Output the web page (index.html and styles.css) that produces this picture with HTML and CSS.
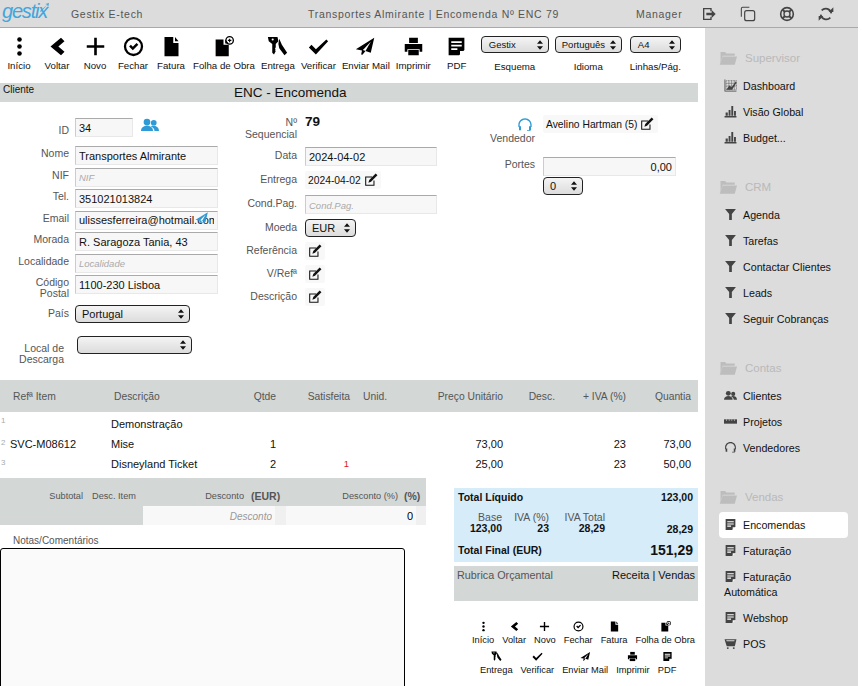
FILE: index.html
```html
<!DOCTYPE html>
<html lang="pt">
<head>
    <meta charset="UTF-8">
    <title>ENC - Encomenda</title>
    <link rel="stylesheet" href="styles.css">
</head>
<body>
    <svg class="icon-defs" aria-hidden="true">
        <symbol id="i-dots" viewBox="0 0 24 24"><circle cx="12" cy="4" r="2.6"/><circle cx="12" cy="12" r="2.6"/><circle cx="12" cy="20" r="2.6"/></symbol>
        <symbol id="i-back" viewBox="0 0 24 24"><path d="M16 2l4 4-7 6 7 6-4 4L4 12z"/></symbol>
        <symbol id="i-plus" viewBox="0 0 24 24"><path d="M10.500 2h3v8.500h8.500v3h-8.500V22h-3v-8.500H2v-3h8.500z"/></symbol>
        <symbol id="i-fechar" viewBox="0 0 24 24"><path d="M12 1a11 11 0 1 0 0 22 11 11 0 0 0 0-22zm0 2.600a8.400 8.400 0 1 1 0 16.800 8.400 8.400 0 0 1 0-16.800z"/><path d="M7 12l2-2 2.200 2.200L15.500 8l2 2-6.300 6.200z"/></symbol>
        <symbol id="i-file" viewBox="0 0 24 24"><path d="M4 1h10v7h6v15H4z"/><path d="M16 1l4 5h-4z"/></symbol>
        <symbol id="i-fileplus" viewBox="0 0 24 24"><path d="M3 4h9v6h6v13H3z"/><path d="M14 4l4 4.500h-4z"/><path d="M19 0a5 5 0 1 0 0 10 5 5 0 0 0 0-10zm0 1.500a3.500 3.500 0 1 1 0 7 3.500 3.500 0 0 1 0-7z"/><path d="M18.400 3h1.200v1.400H21v1.200h-1.400V7h-1.200V5.600H17V4.400h1.400z"/></symbol>
        <symbol id="i-keys" viewBox="0 0 24 24"><path d="M1 1h11l1 5-3 3v4l-1 1 1 1-1 1 1 1-2 4-2-2V9L2 6z"/><circle cx="6.500" cy="4" r="1.200" fill="#fff"/><path d="M14 3l3 7 6 9-3 3-6-8-1-5z"/></symbol>
        <symbol id="i-check" viewBox="0 0 24 24"><path d="M1 13l3-3 5 5L21 4l2 2-14 15z"/></symbol>
        <symbol id="i-plane" viewBox="0 0 24 24"><path d="M22 2L1 15l7 1.500L7 21l1.500.5 3.500-4.500 6 2z"/><path d="M18 6.500l-9 9.500 3 1z" fill="#fff"/></symbol>
        <symbol id="i-print" viewBox="0 0 24 24"><path d="M7 2h10v6H7z"/><path d="M2 9h20v9h-3v-3H5v3H2z"/><path d="M6 16h12v6H6z"/></symbol>
        <symbol id="i-note" viewBox="0 0 24 24"><path d="M3 2h18v14l-6 6H3z"/><path d="M6 6h12v2H6zM6 10h12v2H6zM6 14h7v2H6z" fill="#fff"/><path d="M16 17h5l-5 5z" fill="#fff"/></symbol>
        <symbol id="i-edit" viewBox="0 0 24 24"><path d="M2 6h12v1.800H3.800v12.400h12.400V13H18v9H2z"/><path d="M20 1l3 3-11 11-4.500 1.500L9 12z"/></symbol>
        <symbol id="i-users" viewBox="0 0 24 24"><circle cx="8" cy="8" r="4.500"/><path d="M0 20c0-5 4-7 8-7s8 2 8 7z"/><circle cx="17" cy="9" r="3.800"/><path d="M13 13.500c4-1.500 11-.5 11 6.500h-6c0-3-2-5-5-6.500z"/></symbol>
        <symbol id="i-headset" viewBox="0 0 24 24"><path d="M12 2C6 2 2 6.500 2 12v3h2v-3c0-4.500 3.500-8 8-8s8 3.500 8 8v3h2v-3c0-5.500-4-10-10-10z"/><path d="M3 14h3v6H3zM18 14h3v6h-3z"/><path d="M20 19v2h-5v-1h4z"/></symbol>
        <symbol id="i-folder" viewBox="0 0 24 24"><path d="M2 4h6l2 2h11v3H5L2 19z"/><path d="M5 10h19l-3 11H1z"/></symbol>
        <symbol id="i-dash" viewBox="0 0 24 24"><path d="M1 1h1.500v20.500H23V23H1z"/><path d="M4 3h19v17H4z" fill="none" stroke="currentColor" stroke-width="1" stroke-dasharray="2 1"/><path d="M4 8h19M4 13h19M9 3v17M14 3v17M19 3v17" fill="none" stroke="currentColor" stroke-width=".8"/><path d="M4 20l6-8 4 3 8-11 1 3-8 13H4z"/></symbol>
        <symbol id="i-bars" viewBox="0 0 24 24"><path d="M1 20.500h22V23H1zM3 14h4v6H3zM8.500 9h3.500v11H8.500zM13.500 2h3.500v18h-3.500zM18.500 11H22v9h-3.500z"/></symbol>
        <symbol id="i-funnel" viewBox="0 0 24 24"><path d="M2 2h20l-7.500 9v11h-5V11z"/></symbol>
        <symbol id="i-ruler" viewBox="0 0 24 24"><path d="M0 8h24v8H0z"/><path d="M4 8h1v3H4zM9 8h1v3H9zM14 8h1v3h-1zM19 8h1v3h-1z" fill="#dcdcdc"/></symbol>
        <symbol id="i-cart" viewBox="0 0 24 24"><path d="M1 4h22l-3 13H5z"/><path d="M4 6l1 2h14l.5-2z" fill="#dcdcdc"/><circle cx="7" cy="20.500" r="1.800"/><circle cx="18" cy="20.500" r="1.800"/></symbol>
        <symbol id="i-logout" viewBox="0 0 24 24"><path d="M3 3h13v5h-2V5H5v14h9v-3h2v5H3z"/><path d="M8 10h8V6l6 6-6 6v-4H8z"/></symbol>
        <symbol id="i-copy" viewBox="0 0 24 24"><path d="M2 16V4a2 2 0 0 1 2-2h10" fill="none" stroke="currentColor" stroke-width="1.600"/><rect x="7" y="7" width="15" height="15" rx="3" fill="none" stroke="currentColor" stroke-width="1.800"/></symbol>
        <symbol id="i-help" viewBox="0 0 24 24"><circle cx="12" cy="12" r="9.500" fill="none" stroke="currentColor" stroke-width="2.400"/><circle cx="12" cy="12" r="4.500" fill="none" stroke="currentColor" stroke-width="2"/><path d="M5 5l4 4M19 5l-4 4M5 19l4-4M19 19l-4-4" stroke="currentColor" stroke-width="3"/></symbol>
        <symbol id="i-sync" viewBox="0 0 24 24"><path d="M20 11A8.500 8.500 0 0 0 5.500 6.500M4 13a8.500 8.500 0 0 0 14.500 4.500" fill="none" stroke="currentColor" stroke-width="2.600"/><path d="M16 9h7V2zM8 15H1v7z"/></symbol>
        <symbol id="arrows" viewBox="0 0 7 11"><path d="M3.500 0L7 4H0zM3.500 11L0 7h7z"/></symbol>
    </svg>

    <header class="topbar">
        <div class="logo">gestix<svg class="logo-tick" viewBox="0 0 10 10"><path d="M0 9l8-7-2-1 4-1-1 5-1-3-7 8z"/></svg></div>
        <div class="company">Gestix E-tech</div>
        <div class="doc-title">Transportes Almirante | Encomenda Nº ENC 79</div>
        <div class="user">Manager</div>
        <div class="top-icons">
            <svg class="top-icon"><use href="#i-logout"/></svg>
            <svg class="top-icon"><use href="#i-copy"/></svg>
            <svg class="top-icon"><use href="#i-help"/></svg>
            <svg class="top-icon"><use href="#i-sync"/></svg>
        </div>
    </header>

    <div class="layout">
        <main class="content">
            <div class="toolbar">
                <a class="tool"><svg><use href="#i-dots"/></svg>Início</a>
                <a class="tool"><svg><use href="#i-back"/></svg>Voltar</a>
                <a class="tool"><svg><use href="#i-plus"/></svg>Novo</a>
                <a class="tool"><svg><use href="#i-fechar"/></svg>Fechar</a>
                <a class="tool"><svg><use href="#i-file"/></svg>Fatura</a>
                <a class="tool"><svg><use href="#i-fileplus"/></svg>Folha de Obra</a>
                <a class="tool"><svg><use href="#i-keys"/></svg>Entrega</a>
                <a class="tool"><svg><use href="#i-check"/></svg>Verificar</a>
                <a class="tool"><svg><use href="#i-plane"/></svg>Enviar Mail</a>
                <a class="tool"><svg><use href="#i-print"/></svg>Imprimir</a>
                <a class="tool tool-pdf"><svg><use href="#i-note"/></svg>PDF</a>
                <div class="tool-select sel-schema">
                    <div class="select select-small">Gestix<svg class="arrows"><use href="#arrows"/></svg></div>
                    <span>Esquema</span>
                </div>
                <div class="tool-select sel-lang">
                    <div class="select select-small">Português<svg class="arrows"><use href="#arrows"/></svg></div>
                    <span>Idioma</span>
                </div>
                <div class="tool-select sel-lines">
                    <div class="select select-small">A4<svg class="arrows"><use href="#arrows"/></svg></div>
                    <span>Linhas/Pág.</span>
                </div>
            </div>

            <div class="section-bar">
                <span class="section-name">Cliente</span>
                <span class="section-title">ENC - Encomenda</span>
            </div>

            <div class="form">
                <div class="col col-client">
                    <div class="row row-id">
                        <label>ID</label>
                        <input class="field field-id" value="34">
                        <svg class="client-link"><use href="#i-users"/></svg>
                    </div>
                    <div class="row"><label>Nome</label><input class="field" value="Transportes Almirante"></div>
                    <div class="row"><label>NIF</label><input class="field" placeholder="NIF"></div>
                    <div class="row"><label>Tel.</label><input class="field" value="351021013824"></div>
                    <div class="row email-row">
                        <label>Email</label><input class="field" value="ulissesferreira@hotmail.com">
                        <svg class="mail-link"><use href="#i-plane"/></svg>
                    </div>
                    <div class="row"><label>Morada</label><input class="field" value="R. Saragoza Tania, 43"></div>
                    <div class="row"><label>Localidade</label><input class="field" placeholder="Localidade"></div>
                    <div class="row row-postal"><label>Código<br>Postal</label><input class="field" value="1100-230 Lisboa"></div>
                    <div class="row row-pais">
                        <label>País</label>
                        <div class="select select-wide">Portugal<svg class="arrows"><use href="#arrows"/></svg></div>
                    </div>
                    <div class="row row-descarga">
                        <label>Local de<br>Descarga</label>
                        <div class="select select-wide"><svg class="arrows"><use href="#arrows"/></svg></div>
                    </div>
                </div>

                <div class="col col-doc">
                    <div class="row row-seq"><label>Nº<br>Sequencial</label><strong class="seq">79</strong></div>
                    <div class="row row-tall"><label>Data</label><input class="field" value="2024-04-02"></div>
                    <div class="row row-tall"><label>Entrega</label><div class="picker">2024-04-02<svg class="edit"><use href="#i-edit"/></svg></div></div>
                    <div class="row row-tall"><label>Cond.Pag.</label><input class="field" placeholder="Cond.Pag."></div>
                    <div class="row"><label>Moeda</label><div class="select select-coin">EUR<svg class="arrows"><use href="#arrows"/></svg></div></div>
                    <div class="row"><label>Referência</label><div class="picker"><svg class="edit"><use href="#i-edit"/></svg></div></div>
                    <div class="row"><label>V/Refª</label><div class="picker"><svg class="edit"><use href="#i-edit"/></svg></div></div>
                    <div class="row"><label>Descrição</label><div class="picker"><svg class="edit"><use href="#i-edit"/></svg></div></div>
                </div>

                <div class="col col-seller">
                    <div class="row row-seller">
                        <label><svg class="seller-icon"><use href="#i-headset"/></svg>Vendedor</label>
                        <div class="picker">Avelino Hartman (5)<svg class="edit"><use href="#i-edit"/></svg></div>
                    </div>
                    <div class="row row-portes">
                        <label>Portes</label>
                        <div class="portes">
                            <input class="field field-num" value="0,00">
                            <div class="select select-tiny">0<svg class="arrows"><use href="#arrows"/></svg></div>
                        </div>
                    </div>
                </div>
            </div>

            <table class="items">
                <thead>
                    <tr>
                        <th class="c-ref">Refª Item</th>
                        <th class="c-desc">Descrição</th>
                        <th class="c-qty">Qtde</th>
                        <th class="c-sat">Satisfeita</th>
                        <th class="c-unit">Unid.</th>
                        <th class="c-price">Preço Unitário</th>
                        <th class="c-disc">Desc.</th>
                        <th class="c-vat">+ IVA (%)</th>
                        <th class="c-total">Quantia</th>
                    </tr>
                </thead>
                <tbody>
                    <tr>
                        <td class="c-ref"><span class="line-no">1</span></td>
                        <td class="c-desc">Demonstração</td>
                        <td class="c-qty"></td><td class="c-sat"></td><td class="c-unit"></td>
                        <td class="c-price"></td><td class="c-disc"></td><td class="c-vat"></td><td class="c-total"></td>
                    </tr>
                    <tr>
                        <td class="c-ref"><span class="line-no">2</span>SVC-M08612</td>
                        <td class="c-desc">Mise</td>
                        <td class="c-qty">1</td><td class="c-sat"></td><td class="c-unit"></td>
                        <td class="c-price">73,00</td><td class="c-disc"></td><td class="c-vat">23</td><td class="c-total">73,00</td>
                    </tr>
                    <tr>
                        <td class="c-ref"><span class="line-no">3</span></td>
                        <td class="c-desc">Disneyland Ticket</td>
                        <td class="c-qty">2</td><td class="c-sat pending">1</td><td class="c-unit"></td>
                        <td class="c-price">25,00</td><td class="c-disc"></td><td class="c-vat">23</td><td class="c-total">50,00</td>
                    </tr>
                </tbody>
            </table>

            <div class="bottom">
                <div class="bottom-left">
                    <div class="discounts">
                        <div class="disc-head">
                            <span class="dh-sub">Subtotal</span>
                            <span class="dh-item">Desc. Item</span>
                            <span class="dh-val">Desconto</span>
                            <b class="dh-eur">(EUR)</b>
                            <span class="dh-pct">Desconto (%)</span>
                            <b class="dh-sym">(%)</b>
                        </div>
                        <div class="disc-inputs">
                            <div class="disc-fields">
                                <input class="disc-input" placeholder="Desconto">
                                <input class="disc-input disc-pct" value="0">
                            </div>
                        </div>
                    </div>
                    <div class="notes-label">Notas/Comentários</div>
                    <textarea class="notes"></textarea>
                </div>

                <div class="bottom-right">
                    <div class="totals">
                        <div class="total-line"><span>Total Líquido</span><span>123,00</span></div>
                        <div class="vat-line">
                            <div class="vat-cell vat-base"><span>Base</span><b>123,00</b></div>
                            <div class="vat-cell vat-rate"><span>IVA (%)</span><b>23</b></div>
                            <div class="vat-cell vat-sum"><span>IVA Total</span><b>28,29</b></div>
                            <b class="vat-total">28,29</b>
                        </div>
                        <div class="total-line final"><span>Total Final (EUR)</span><span class="grand">151,29</span></div>
                    </div>
                    <div class="budget"><span>Rubrica Orçamental</span><span class="budget-val">Receita | Vendas</span></div>
                    <div class="mini-tools">
                        <div class="mini-row">
                            <a class="tool mini"><svg><use href="#i-dots"/></svg>Início</a>
                            <a class="tool mini"><svg><use href="#i-back"/></svg>Voltar</a>
                            <a class="tool mini"><svg><use href="#i-plus"/></svg>Novo</a>
                            <a class="tool mini"><svg><use href="#i-fechar"/></svg>Fechar</a>
                            <a class="tool mini"><svg><use href="#i-file"/></svg>Fatura</a>
                            <a class="tool mini"><svg><use href="#i-fileplus"/></svg>Folha de Obra</a>
                        </div>
                        <div class="mini-row">
                            <a class="tool mini"><svg><use href="#i-keys"/></svg>Entrega</a>
                            <a class="tool mini"><svg><use href="#i-check"/></svg>Verificar</a>
                            <a class="tool mini"><svg><use href="#i-plane"/></svg>Enviar Mail</a>
                            <a class="tool mini"><svg><use href="#i-print"/></svg>Imprimir</a>
                            <a class="tool mini"><svg><use href="#i-note"/></svg>PDF</a>
                        </div>
                    </div>
                </div>
            </div>
        </main>

        <nav class="sidebar">
            <div class="group">
                <div class="group-head"><svg><use href="#i-folder"/></svg>Supervisor</div>
                <a class="item"><svg><use href="#i-dash"/></svg>Dashboard</a>
                <a class="item"><svg><use href="#i-bars"/></svg>Visão Global</a>
                <a class="item"><svg><use href="#i-bars"/></svg>Budget...</a>
            </div>
            <div class="group">
                <div class="group-head"><svg><use href="#i-folder"/></svg>CRM</div>
                <a class="item"><svg><use href="#i-funnel"/></svg>Agenda</a>
                <a class="item"><svg><use href="#i-funnel"/></svg>Tarefas</a>
                <a class="item"><svg><use href="#i-funnel"/></svg>Contactar Clientes</a>
                <a class="item"><svg><use href="#i-funnel"/></svg>Leads</a>
                <a class="item"><svg><use href="#i-funnel"/></svg>Seguir Cobranças</a>
            </div>
            <div class="group">
                <div class="group-head"><svg><use href="#i-folder"/></svg>Contas</div>
                <a class="item"><svg><use href="#i-users"/></svg>Clientes</a>
                <a class="item"><svg><use href="#i-ruler"/></svg>Projetos</a>
                <a class="item"><svg><use href="#i-headset"/></svg>Vendedores</a>
            </div>
            <div class="group">
                <div class="group-head"><svg><use href="#i-folder"/></svg>Vendas</div>
                <a class="item active"><svg><use href="#i-note"/></svg>Encomendas</a>
                <a class="item"><svg><use href="#i-note"/></svg>Faturação</a>
                <a class="item item-wrap"><svg><use href="#i-note"/></svg>Faturação Automática</a>
                <a class="item"><svg><use href="#i-note"/></svg>Webshop</a>
                <a class="item"><svg><use href="#i-cart"/></svg>POS</a>
            </div>
            <div class="group">
                <div class="group-head"><svg><use href="#i-folder"/></svg></div>
            </div>
        </nav>
    </div>
</body>
</html>
```

FILE: styles.css
```css
html, body {
    margin: 0;
    height: 686px;
    overflow: hidden;
}

body {
    font-family: 'Liberation Sans', Arial, sans-serif;
    font-size: 11px;
    color: #111;
    background: #fff;
}

.icon-defs {
    position: absolute;
    width: 0;
    height: 0;
}

a {
    color: inherit;
    text-decoration: none;
}

/* top bar */
.topbar {
    width: 858px;
    height: 27px;
    display: flex;
    align-items: center;
    background: #dcdcdc;
    border-bottom: 1px solid #a9a9a9;
    color: #555;
    font-size: 10.5px;
    letter-spacing: 0.7px;
}

.logo {
    width: 71px;
    padding-left: 2px;
    box-sizing: border-box;
    font-size: 20px;
    font-style: italic;
    letter-spacing: -1.2px;
    color: #42a5dc;
    position: relative;
    top: -2px;
}

.logo-tick {
    position: absolute;
    left: 40px;
    top: 3px;
    width: 9px;
    height: 9px;
    fill: #42a5dc;
}

.company {
    width: 237px;
}

.doc-title {
    width: 328px;
}

.user {
    width: 65px;
}

.top-icons {
    display: flex;
    gap: 23px;
}

.top-icon {
    width: 16px;
    height: 16px;
    fill: #444;
    color: #444;
}

/* layout */
.layout {
    display: flex;
    height: 658px;
}

.content {
    width: 705px;
    flex: none;
}

.sidebar {
    width: 153px;
    flex: none;
    box-sizing: border-box;
    padding: 16px 10px 0 14px;
    background: #dcdcdc;
    overflow: hidden;
}

/* toolbar */
.toolbar {
    height: 55px;
    display: flex;
    align-items: flex-start;
    padding-top: 8px;
    box-sizing: border-box;
}

.tool {
    display: flex;
    flex-direction: column;
    align-items: center;
    flex: none;
    min-width: 38px;
    padding: 0 3px;
    box-sizing: border-box;
    font-size: 9.7px;
    line-height: 12px;
    color: #111;
    white-space: nowrap;
}

.tool svg {
    width: 21px;
    height: 21px;
    margin-bottom: 3px;
    fill: #000;
    color: #000;
}

.tool-pdf {
    min-width: 46px;
}

.tool-select {
    display: flex;
    flex-direction: column;
    align-items: center;
    font-size: 9.7px;
    gap: 8px;
}

.sel-schema {
    margin-left: 1px;
}

.sel-lang {
    margin-left: 6px;
}

.sel-lines {
    margin-left: 8px;
}

.select {
    display: flex;
    align-items: center;
    box-sizing: border-box;
    border: 1px solid #222;
    border-radius: 4px;
    background: linear-gradient(#f4f4f4, #dcdcdc);
    font-size: 11px;
    color: #111;
    padding: 0 5px 0 6px;
}

.select-small {
    height: 17px;
    font-size: 9.5px;
    width: 68px;
    padding-left: 7px;
}

.sel-lang .select-small {
    width: 67px;
    padding-left: 6px;
}

.sel-lines .select-small {
    width: 51px;
}

.arrows {
    width: 6px;
    height: 10px;
    margin-left: auto;
    fill: #111;
    flex: none;
}

/* section title */
.section-bar {
    height: 19px;
    width: 698px;
    display: flex;
    background: #d3d7d5;
}

.section-name {
    width: 231px;
    padding-left: 3px;
    font-size: 10px;
    line-height: 14px;
}

.section-title {
    font-size: 13.5px;
    line-height: 19px;
}

/* form */
.form {
    height: 278px;
    display: flex;
    width: 698px;
}

.col {
    flex: none;
    color: #555;
}

.col-client {
    width: 220px;
    padding-top: 16px;
}

.col-doc {
    width: 238px;
    padding-top: 11px;
}

.col-seller {
    padding-top: 13px;
}

.row {
    display: flex;
    align-items: flex-start;
    height: 21.5px;
    position: relative;
}

.row label {
    flex: none;
    text-align: right;
    font-size: 10.5px;
    line-height: 11px;
    padding-top: 2px;
}

.col-client label {
    width: 69px;
    margin-right: 6px;
}

.col-doc label {
    width: 77px;
    margin-right: 8px;
}

.col-seller label {
    width: 77px;
    margin-right: 8px;
}

.field {
    box-sizing: border-box;
    width: 143px;
    height: 19px;
    padding: 0 3px;
    border: 1px solid #e8e8e8;
    border-top-color: #aaa;
    border-left-color: #ccc;
    background: #f7f7f7;
    font: 11px 'Liberation Sans', Arial, sans-serif;
    color: #111;
    outline: none;
}

.field::placeholder {
    font-size: 9.5px;
    font-style: italic;
    color: #aaa;
}

.col-doc .field {
    width: 132px;
}

.row-id {
    height: 28px;
}

.row-id label {
    padding-top: 7px;
}

.field-id {
    width: 58px;
}

.client-link {
    width: 18px;
    height: 18px;
    margin-left: 8px;
    margin-top: -2px;
    fill: #2e9ad6;
}

.mail-link {
    position: absolute;
    left: 195px;
    top: 0;
    width: 14px;
    height: 14px;
    fill: #2e9ad6;
}

.select-wide {
    width: 115px;
    height: 18px;
}

.row-pais {
    margin-top: 8px;
    height: 31px;
}

.row-pais label {
    padding-top: 3px;
}

.row-descarga label {
    padding-top: 7px;
    width: 64px;
    margin-right: 13px;
}

.seq {
    margin-top: 1px;
    font-size: 13.5px;
    line-height: 16px;
    color: #111;
}

.col-doc .row {
    height: 23px;
}

.col-doc .row-tall {
    height: 24px;
}

.col-doc .row-seq {
    height: 34px;
}

.col-doc .row label {
    padding-top: 3px;
}

.col-doc .row-seq label {
    line-height: 12px;
}

.picker {
    display: flex;
    align-items: center;
    height: 18px;
    min-width: 14px;
    padding: 0 3px;
    background: #f8f8f8;
    border-radius: 2px;
    font-size: 10.3px;
    color: #111;
    gap: 3px;
}

.edit {
    width: 14px;
    height: 14px;
    fill: #111;
    flex: none;
}

.select-coin {
    width: 51px;
    height: 18px;
}

.row-seller {
    height: 42px;
}

.row-seller .picker {
    padding: 0 4px 0 3px;
}

.seller-icon {
    display: block;
    width: 16px;
    height: 16px;
    margin: 0 2px 0 auto;
    fill: #2e9ad6;
}

.portes {
    display: flex;
    flex-direction: column;
    gap: 1px;
}

.col-seller .field-num {
    width: 133px;
    text-align: right;
}

.select-tiny {
    width: 40px;
    height: 18px;
}

/* items table */
.items {
    width: 698px;
    border-collapse: collapse;
    table-layout: fixed;
    font-size: 11px;
}

.items th,
.items td {
    box-sizing: border-box;
    padding: 0;
}

.items th {
    height: 32px;
    background: #d3d7d5;
    color: #555;
    font-size: 10.3px;
    font-weight: normal;
}

.items td {
    height: 19px;
    color: #111;
}

.items tbody tr:first-child td {
    height: 22px;
    padding-top: 2px;
}

.items tbody tr:nth-child(2) td {
    height: 20px;
}

.c-ref { width: 110px; text-align: left; }
.c-desc { width: 130px; text-align: left; }
.c-qty { width: 40px; text-align: right; }
.c-sat { width: 74px; text-align: right; }
.c-unit { width: 56px; text-align: left; }
.c-price { width: 97px; text-align: right; }
.c-disc { width: 52px; text-align: right; }
.c-vat { width: 71px; text-align: right; }
.c-total { width: 68px; text-align: right; }

.items .c-ref { position: relative; padding-left: 10px; }
.items th.c-ref { padding-left: 13px; }
.items .c-desc { padding-left: 1px; }
.items th.c-desc { padding-left: 4px; }
.items .c-qty { padding-right: 4px; }
.items .c-sat { padding-right: 4px; }
.items .c-unit { padding-left: 9px; }
.items .c-price { padding-right: 4px; }
.items .c-disc { padding-right: 4px; }
.items .c-vat { padding-right: 4px; }
.items .c-total { padding-right: 7px; }

.items .pending {
    color: #d8182c;
    font-size: 9.5px;
    padding-right: 5px;
}

.line-no {
    position: absolute;
    left: 1px;
    top: 4px;
    font-size: 8px;
    color: #aaa;
}

/* bottom area */
.bottom {
    display: flex;
    width: 698px;
    margin-top: 5px;
}

.bottom-left {
    width: 454px;
    flex: none;
}

.discounts {
    width: 426px;
    height: 47px;
    background: #d3d7d5;
    color: #555;
    font-size: 9.2px;
}

.disc-head {
    height: 28px;
    padding-top: 8px;
    box-sizing: border-box;
    display: flex;
    align-items: center;
}

.disc-head b {
    font-size: 10.5px;
}

.dh-sub {
    width: 83px;
    text-align: right;
}

.dh-item {
    margin-left: 9px;
    width: 50px;
}

.dh-val {
    width: 102px;
    text-align: right;
}

.dh-eur {
    margin-left: 7px;
    width: 40px;
}

.dh-pct {
    width: 107px;
    text-align: right;
}

.dh-sym {
    margin-left: 6px;
}

.disc-inputs {
    height: 19px;
    padding-left: 143px;
}

.disc-fields {
    display: flex;
    height: 19px;
    gap: 11px;
    background: #f0f0f0;
}

.disc-input {
    box-sizing: border-box;
    width: 132px;
    height: 19px;
    padding: 0 3px;
    border: 0;
    background: #f8f8f8;
    text-align: right;
    font: 11px 'Liberation Sans', Arial, sans-serif;
    outline: none;
}

.disc-input::placeholder {
    font-size: 10px;
    font-style: italic;
    color: #999;
}

.disc-pct {
    width: 130px;
}

.notes-label {
    margin: 10px 0 1px 13px;
    font-size: 10px;
    line-height: 12px;
    color: #555;
}

.notes {
    display: block;
    box-sizing: border-box;
    width: 405px;
    height: 160px;
    border: 1px solid #000;
    border-radius: 3px;
    background: #fafafa;
    resize: none;
}

.bottom-right {
    width: 244px;
    flex: none;
    padding-top: 10px;
}

.totals {
    height: 74px;
    padding: 2px 5px 0 4px;
    box-sizing: border-box;
    background: #d6ecf9;
    font-size: 10.5px;
}

.total-line {
    display: flex;
    justify-content: space-between;
    font-weight: bold;
    line-height: 14px;
}

.vat-line {
    display: flex;
    margin-top: 8px;
    height: 23px;
    line-height: 11px;
}

.vat-cell {
    display: flex;
    flex-direction: column;
    align-items: flex-end;
    color: #555;
}

.vat-cell b {
    color: #111;
}

.vat-base { width: 44px; }
.vat-rate { width: 47px; }
.vat-sum { width: 56px; }

.vat-total {
    margin-left: auto;
    align-self: flex-end;
}

.final {
    margin-top: 8px;
    align-items: center;
}

.grand {
    font-size: 14px;
}

.budget {
    height: 35px;
    margin-top: 4px;
    padding: 3px 3px 0 3px;
    box-sizing: border-box;
    display: flex;
    justify-content: space-between;
    background: #d3d7d5;
    color: #555;
    font-size: 10.8px;
}

.budget-val {
    font-size: 11px;
    color: #111;
}

.mini-tools {
    margin-top: 20px;
    margin-left: 14px;
}

.mini-row {
    display: flex;
    height: 30px;
}

.mini-row + .mini-row {
    padding-left: 8px;
}

.tool.mini {
    min-width: 0;
    padding: 0 4px;
    font-size: 9.3px;
    line-height: 10px;
}

.tool.mini svg {
    width: 11px;
    height: 11px;
    margin-bottom: 3px;
}

/* sidebar */
.group {
    margin-bottom: 22px;
}

.group-head {
    display: flex;
    align-items: flex-start;
    height: 29px;
    padding-top: 5px;
    box-sizing: border-box;
    font-size: 11.5px;
    line-height: 18px;
    color: #b9b9b9;
}

.group-head svg {
    width: 18px;
    height: 18px;
    margin-right: 8px;
    fill: #bdbdbd;
}

.item {
    display: block;
    min-height: 26px;
    line-height: 26px;
    padding-left: 5px;
    border-radius: 4px;
    font-size: 10.7px;
    color: #111;
}

.item svg {
    display: inline-block;
    vertical-align: -2px;
    width: 13px;
    height: 13px;
    margin-right: 6px;
    fill: #444;
    color: #444;
}

.item-wrap {
    line-height: 15px;
    padding-top: 6px;
    padding-bottom: 5px;
    padding-right: 40px;
}

.active {
    background: #fff;
}
```
